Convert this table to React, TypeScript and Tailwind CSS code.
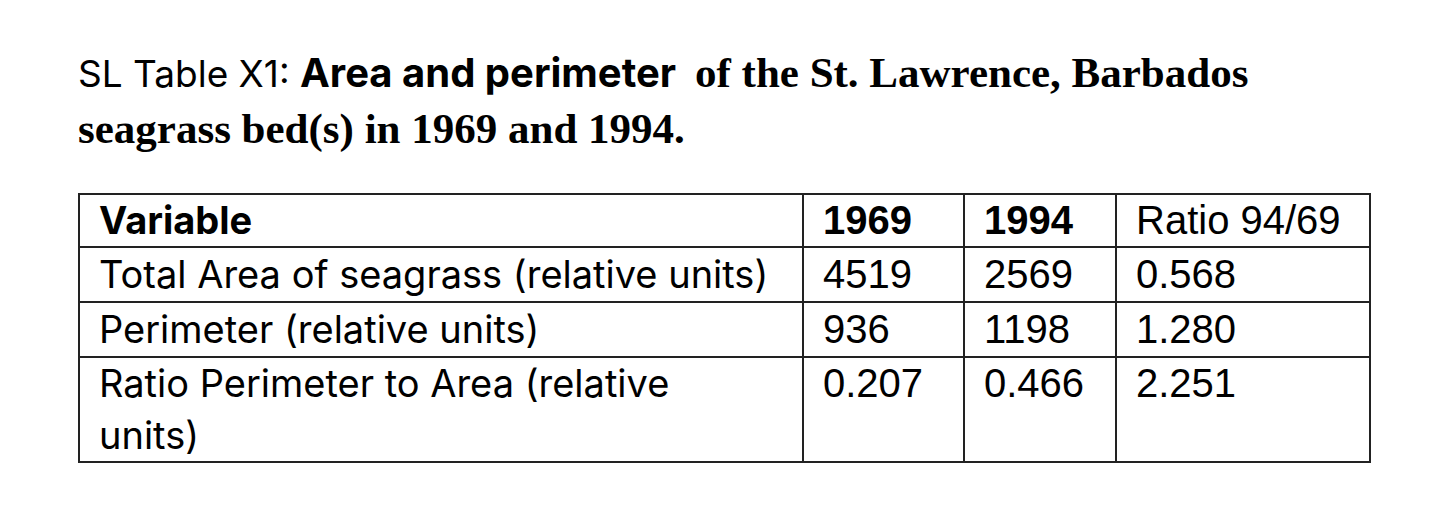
import React from 'react';

const rows = [
  { label: 'Total Area of seagrass (relative units)', a: '4519', b: '2569', r: '0.568' },
  { label: 'Perimeter (relative units)', a: '936', b: '1198', r: '1.280' },
  { label: 'Ratio Perimeter to Area (relative units)', a: '0.207', b: '0.466', r: '2.251' },
];

const sans = "font-['Inter','Noto_Sans',sans-serif]";
const serif = "font-['Liberation_Serif','Times_New_Roman',serif]";
const arial = "font-['Liberation_Sans',Arial,sans-serif]";
const cell = 'border-2 border-[#222] align-top text-left pl-[19px]';
const labelCell = `${sans} ${cell} pr-[30px] text-[38px]`;
const numCell = `${arial} ${cell} pr-[6px] text-[40px] whitespace-nowrap`;

const App: React.FC = () => {
  return (
    <div className="w-[1432px] h-[512px] bg-white text-black pl-[78px] pt-[45px]">
      {/* Caption */}
      <div className="whitespace-nowrap">
        <div className="h-[56px] leading-[56px]">
          <span className={`${sans} text-[37px]`}>SL Table X1: </span>
          <span className={`${sans} text-[40px] font-bold`}>Area and perimeter&nbsp; </span>
          <span className={`${serif} text-[43px] font-bold`}>of the St. Lawrence, Barbados</span>
        </div>
        <div className={`${serif} h-[56px] leading-[56px] text-[43px] font-bold`}>
          seagrass bed(s) in 1969 and 1994.
        </div>
      </div>

      {/* Table */}
      <table className="mt-[36px] border-collapse border-2 border-[#222] table-fixed w-[1291px]">
        <colgroup>
          <col className="w-[724px]" />
          <col className="w-[161px]" />
          <col className="w-[152px]" />
          <col className="w-[254px]" />
        </colgroup>
        <thead>
          <tr>
            <th className={`${labelCell} font-bold leading-[51px]`}>Variable</th>
            <th className={`${numCell} font-bold leading-[51px]`}>1969</th>
            <th className={`${numCell} font-bold leading-[51px]`}>1994</th>
            <th className={`${numCell} font-normal leading-[51px]`}>Ratio 94/69</th>
          </tr>
        </thead>
        <tbody>
          {rows.map((row, i) => {
            const lh = i === rows.length - 1 ? 'leading-[51.5px]' : 'leading-[53px]';
            return (
              <tr key={row.label}>
                <td className={`${labelCell} ${lh}`}>{row.label}</td>
                <td className={`${numCell} ${lh}`}>{row.a}</td>
                <td className={`${numCell} ${lh}`}>{row.b}</td>
                <td className={`${numCell} ${lh}`}>{row.r}</td>
              </tr>
            );
          })}
        </tbody>
      </table>
    </div>
  );
};

export default App;
